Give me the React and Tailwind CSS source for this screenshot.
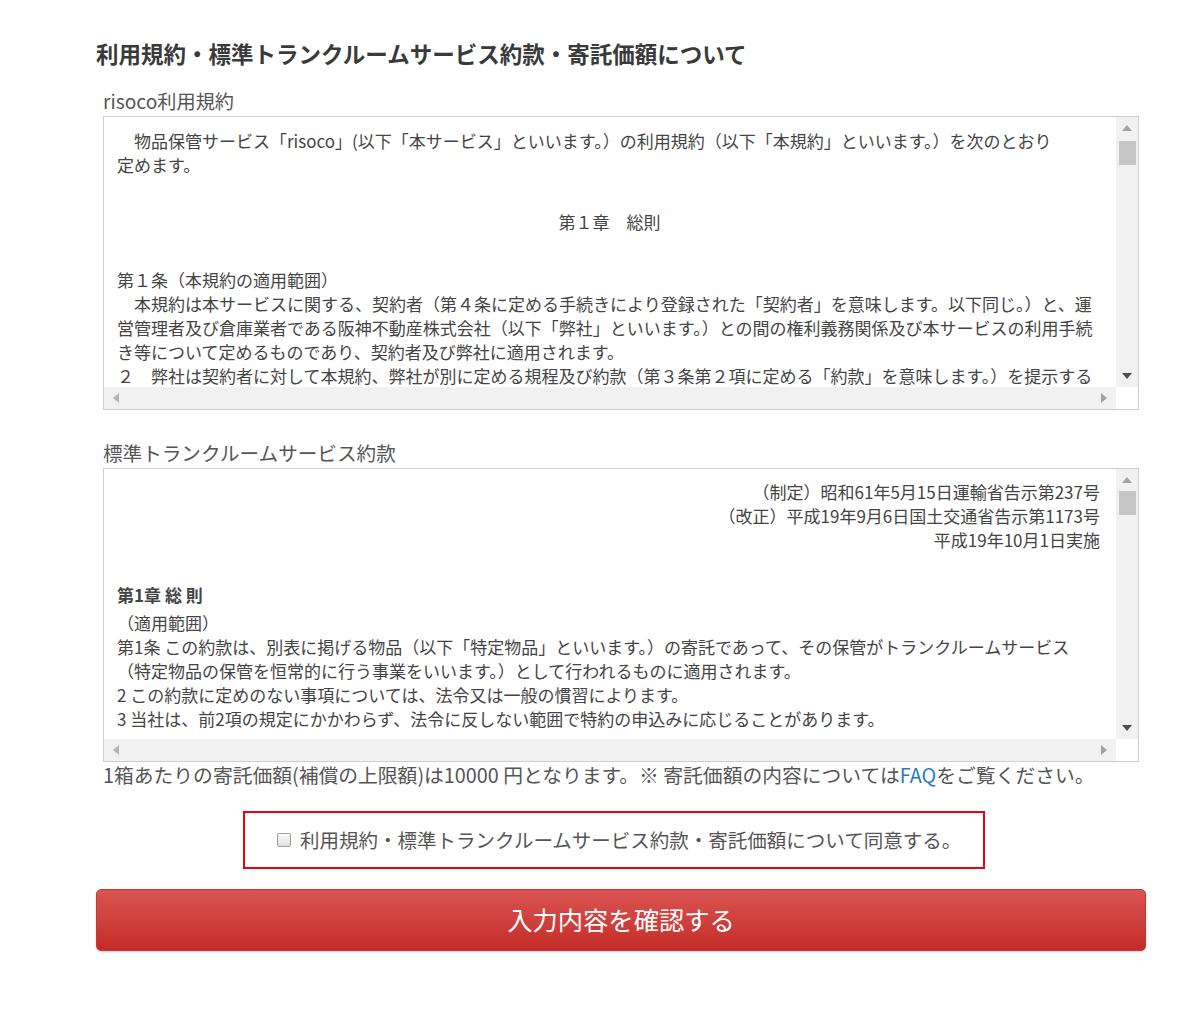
const font = { fontFamily: '"Noto Sans CJK JP", "Noto Sans", sans-serif' }

const Tri = ({ dir, color }) => {
  const pts = {
    up: '0,6 5,0 10,6',
    down: '0,0 10,0 5,6',
    left: '6,0 6,10 0,5',
    right: '0,0 0,10 6,5',
  }[dir]
  const w = dir === 'up' || dir === 'down' ? 10 : 6
  const h = dir === 'up' || dir === 'down' ? 6 : 10
  return (
    <svg width={w} height={h} viewBox={`0 0 ${w} ${h}`}>
      <polygon points={pts} fill={color} />
    </svg>
  )
}

const ScrollBox = ({ children, thumbTop }) => (
  <div className="ml-[7px] w-[1036px] h-[294px] border border-[#cfcfcf] flex flex-col bg-white">
    <div className="flex flex-1 min-h-0">
      <div className="flex-1 overflow-hidden">{children}</div>
      <div className="w-[22px] bg-[#f1f1f1] flex flex-col items-center">
        <div className="h-[22px] flex items-center justify-center">
          <Tri dir="up" color="#a3a3a3" />
        </div>
        <div className={`w-[17px] h-[24px] bg-[#c6c6c6] ${thumbTop}`} />
        <div className="flex-1" />
        <div className="h-[22px] flex items-center justify-center">
          <Tri dir="down" color="#505050" />
        </div>
      </div>
    </div>
    <div className="h-[22px] flex">
      <div className="flex-1 bg-[#f1f1f1] flex items-center justify-between px-[9px]">
        <Tri dir="left" color="#b5b5b5" />
        <Tri dir="right" color="#a3a3a3" />
      </div>
      <div className="w-[22px] bg-white" />
    </div>
  </div>
)

const Line = ({ children, className = '' }) => (
  <div className={`h-[24px] leading-[24px] whitespace-nowrap ${className}`}>{children}</div>
)

export default function App() {
  return (
    <div className="bg-white min-h-[1022px] text-[#444]" style={font}>
      <div className="ml-[96px] w-[1050px] pt-[38px]">
        <h2 className="text-[22.5px] leading-[30px] font-bold text-[#3a3a3a]">
          利用規約・標準トランクルームサービス約款・寄託価額について
        </h2>

        <div className="ml-[7px] mt-[18px] text-[19.2px] leading-[30px] text-[#555]">risoco利用規約</div>
        <ScrollBox thumbTop="mt-[2px]">
          <div className="pl-[13px] pt-[12px] text-[17px] text-[#444]">
            <Line>　物品保管サービス「risoco」(以下「本サービス」といいます。）の利用規約（以下「本規約」といいます。）を次のとおり</Line>
            <Line>定めます。</Line>
            <Line className="mt-[33px] text-center pr-[14px]">第１章　総則</Line>
            <Line className="mt-[34px]">第１条（本規約の適用範囲）</Line>
            <Line>　本規約は本サービスに関する、契約者（第４条に定める手続きにより登録された「契約者」を意味します。以下同じ。）と、運</Line>
            <Line>営管理者及び倉庫業者である阪神不動産株式会社（以下「弊社」といいます。）との間の権利義務関係及び本サービスの利用手続</Line>
            <Line>き等について定めるものであり、契約者及び弊社に適用されます。</Line>
            <Line className="h-[22px]">２　弊社は契約者に対して本規約、弊社が別に定める規程及び約款（第３条第２項に定める「約款」を意味します。）を提示する</Line>
          </div>
        </ScrollBox>

        <div className="ml-[7px] mt-[28px] text-[19.6px] leading-[30px] text-[#555]">標準トランクルームサービス約款</div>
        <ScrollBox thumbTop="mt-[0px]">
          <div className="pl-[13px] pr-[16px] pt-[11px] text-[17px] text-[#444]">
            <Line className="text-right">（制定）昭和61年5月15日運輸省告示第237号</Line>
            <Line className="text-right">（改正）平成19年9月6日国土交通省告示第1173号</Line>
            <Line className="text-right">平成19年10月1日実施</Line>
            <Line className="mt-[31px] font-bold">第1章 総 則</Line>
            <Line className="mt-[4px]">（適用範囲）</Line>
            <Line>第1条 この約款は、別表に掲げる物品（以下「特定物品」といいます。）の寄託であって、その保管がトランクルームサービス</Line>
            <Line>（特定物品の保管を恒常的に行う事業をいいます。）として行われるものに適用されます。</Line>
            <Line>2 この約款に定めのない事項については、法令又は一般の慣習によります。</Line>
            <Line>3 当社は、前2項の規定にかかわらず、法令に反しない範囲で特約の申込みに応じることがあります。</Line>
          </div>
        </ScrollBox>

        <p className="ml-[7px] text-[19.8px] leading-[26px] text-[#555] whitespace-nowrap">
          1箱あたりの寄託価額(補償の上限額)は10000 円となります。※ 寄託価額の内容については
          <a href="#" className="text-[#2a7ac0]">FAQ</a>をご覧ください。
        </p>

        <div className="ml-[147px] mt-[23px] w-[742px] h-[58px] border-2 border-[#e50012] flex items-center pl-[32px]">
          <label className="flex items-center gap-[9px] text-[19.5px] text-[#555] whitespace-nowrap">
            <span className="w-[14px] h-[14px] border border-[#a0a0a0] rounded-[2px] bg-gradient-to-b from-[#fafafa] to-[#e0e0e0]" />
            利用規約・標準トランクルームサービス約款・寄託価額について同意する。
          </label>
        </div>

        <button className="mt-[20px] w-full h-[62px] rounded-[5px] bg-gradient-to-b from-[#da5452] to-[#c42a27] border border-[#c03a38] text-white text-[25.3px] shadow-[0_1px_2px_rgba(0,0,0,0.2)]">
          入力内容を確認する
        </button>
      </div>
    </div>
  )
}
